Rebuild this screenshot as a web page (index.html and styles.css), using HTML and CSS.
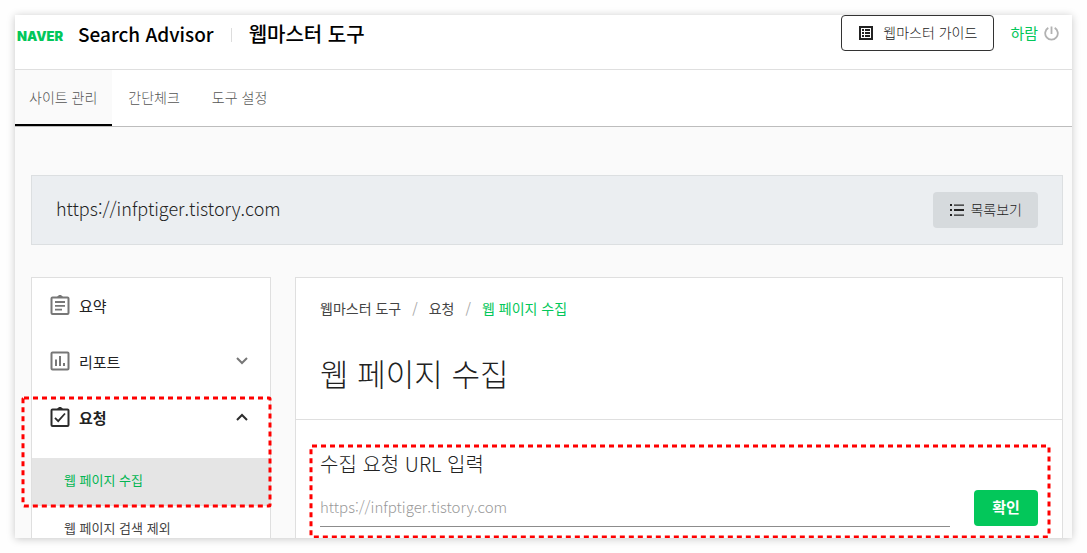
FILE: index.html
```html
<!DOCTYPE html>
<html lang="ko">
<head>
<meta charset="utf-8">
<meta name="viewport" content="width=device-width, initial-scale=1">
<title>웹마스터 도구</title>
<link rel="stylesheet" href="styles.css">
</head>
<body>
<div class="frame">
  <header class="header">
    <a class="logo" href="#">NAVER</a>
    <a class="brand" href="#">Search Advisor</a>
    <span class="divider"></span>
    <strong class="product">웹마스터 도구</strong>
    <div class="account">
      <button class="guide" type="button">
        <svg class="icon-guide" viewBox="0 0 14 14" aria-hidden="true"><path fill="none" stroke="currentColor" stroke-width="2" d="M1 1h12v12H1z"/><path fill="currentColor" d="M3 3h2v2H3zM6 3h5v2H6zM3 6h2v2H3zM6 6h5v2H6zM3 9h2v2H3zM6 9h5v2H6z"/></svg>
        웹마스터 가이드
      </button>
      <a class="user" href="#">하람</a>
      <button class="power" type="button" aria-label="로그아웃">
        <svg viewBox="0 0 15 15" aria-hidden="true"><path d="M7.500 0.500v7.500M4.300 1.900a6.300 6.300 0 1 0 6.400 0" fill="none" stroke="currentColor" stroke-width="1.800"/></svg>
      </button>
    </div>
  </header>
  <nav class="tabs">
    <a class="tab tab-active" href="#">사이트 관리</a>
    <a class="tab" href="#">간단체크</a>
    <a class="tab" href="#">도구 설정</a>
  </nav>
  <div class="content">
    <section class="site">
      <span class="site-url">https://infptiger.tistory.com</span>
      <button class="list-button" type="button">
        <svg class="icon-list" viewBox="0 0 14 12" aria-hidden="true"><path fill="currentColor" d="M0 0h2v2H0zM0 5h2v2H0zM0 10h2v2H0zM4 0.500h10v1.200H4zM4 5h10v2H4zM4 10.500h10v1.200H4z"/></svg>
        목록보기
      </button>
    </section>
    <div class="columns">
      <aside class="sidebar">
        <a class="menu" href="#">
          <svg class="icon-menu" viewBox="0 0 20 20" aria-hidden="true"><rect x="1.500" y="2.500" width="17" height="16.500" rx="1" fill="none" stroke="currentColor" stroke-width="2"/><path d="M6 2.500C7.500 2.500 7.500 0 10 0s2.500 2.500 4 2.500z" fill="currentColor"/><path d="M5 7h10M5 10.800h10M5 14.600h7" stroke="currentColor" stroke-width="1.800"/></svg>
          요약
        </a>
        <a class="menu" href="#">
          <svg class="icon-menu" viewBox="0 0 20 20" aria-hidden="true"><rect x="1.500" y="1.500" width="17" height="17" rx="1" fill="none" stroke="currentColor" stroke-width="2"/><path d="M6 8.500V15M10 5v10M14 12v3" stroke="currentColor" stroke-width="2"/></svg>
          리포트
          <svg class="chevron" viewBox="0 0 12 8" aria-hidden="true"><path d="M1 1l5 5 5-5" fill="none" stroke="currentColor" stroke-width="2"/></svg>
        </a>
        <div class="group">
          <a class="menu menu-open" href="#">
            <svg class="icon-menu" viewBox="0 0 20 20" aria-hidden="true"><rect x="1.500" y="2.500" width="17" height="16.500" rx="1" fill="none" stroke="currentColor" stroke-width="2"/><path d="M6 2.500C7.500 2.500 7.500 0 10 0s2.500 2.500 4 2.500z" fill="currentColor"/><path d="M5 10.800l3.200 3.400 6.800-7.700" fill="none" stroke="currentColor" stroke-width="1.800"/></svg>
            요청
            <svg class="chevron" viewBox="0 0 12 8" aria-hidden="true"><path d="M1 7l5-5 5 5" fill="none" stroke="currentColor" stroke-width="2"/></svg>
          </a>
          <a class="submenu submenu-active" href="#">웹 페이지 수집</a>
          <svg class="outline outline-menu" aria-hidden="true"><rect class="dash" x="2" y="2" rx="1"/></svg>
        </div>
        <a class="submenu" href="#">웹 페이지 검색 제외</a>
      </aside>
      <main class="panel">
        <div class="panel-head">
          <nav class="crumbs">
            <a class="crumb" href="#">웹마스터 도구</a>
            <span class="slash">/</span>
            <a class="crumb" href="#">요청</a>
            <span class="slash">/</span>
            <a class="crumb crumb-current" href="#">웹 페이지 수집</a>
          </nav>
          <h1 class="title">웹 페이지 수집</h1>
        </div>
        <form class="request">
          <label class="request-label" for="url">수집 요청 URL 입력</label>
          <div class="request-row">
            <input class="request-input" id="url" type="text" placeholder="https://infptiger.tistory.com">
            <button class="submit" type="button">확인</button>
          </div>
          <svg class="outline outline-form" aria-hidden="true"><rect class="dash" x="2" y="2" rx="1"/></svg>
        </form>
      </main>
    </div>
  </div>
</div>
</body>
</html>
```

FILE: styles.css
```css
* { box-sizing: border-box; }

body {
  margin: 0;
  height: 100vh;
  padding: 15px;
  background: #fefefe;
  color: #222;
  font-family: "Noto Sans CJK KR", sans-serif;
  font-weight: 300;
}

a { color: inherit; text-decoration: none; }
button, input { font: inherit; color: inherit; }
button { cursor: pointer; }
svg { display: block; flex: none; }

.frame {
  height: 100%;
  overflow: hidden;
  background: #fafafa;
  box-shadow: 0 1px 8px rgba(0, 0, 0, 0.22);
}

.header {
  display: flex;
  align-items: center;
  height: 55px;
  padding: 0 13px 18px 2px;
  background: #fff;
  border-bottom: 1px solid #dfdfdf;
  color: #000;
}

.logo {
  width: 48px;
  margin-top: 6px;
  color: #03c75a;
  font-family: Inter, "Open Sans", sans-serif;
  font-size: 13px;
  font-weight: 900;
}

.brand {
  margin-left: 13px;
  font-size: 19px;
  font-weight: 500;
}

.divider {
  width: 1px;
  height: 14px;
  margin: 4px 17px 0;
  background: #ddd;
}

.product { font-size: 20px; font-weight: 500; }

.account {
  display: flex;
  align-items: center;
  margin-left: auto;
}

.guide {
  display: flex;
  align-items: center;
  gap: 10px;
  height: 36px;
  padding: 0 16px 2px 17px;
  background: #fff;
  border: 1px solid #333;
  border-radius: 4px;
  color: #222;
  font-size: 14px;
}

.icon-guide { width: 14px; height: 14px; margin-top: 2px; }

.user {
  margin-left: 16px;
  padding-bottom: 2px;
  color: #03c75a;
  font-size: 15px;
  font-weight: 400;
}

.power {
  margin-left: 6px;
  padding: 0;
  background: none;
  border: 0;
  color: #b2b2b2;
}

.power svg { width: 15px; height: 15px; }

.tabs {
  display: flex;
  height: 57px;
  background: #fff;
  border-bottom: 1px solid #bdbdbd;
}

.tab {
  height: 56px;
  padding: 0 16px;
  color: #555;
  font-size: 14px;
  line-height: 54px;
}

.tab-active {
  padding: 0 15px 0 14px;
  background: #fafafa;
  border-bottom: 2px solid #000;
}

.content { padding: 48px 9px 0 16px; }

.site {
  display: flex;
  align-items: center;
  justify-content: space-between;
  height: 70px;
  padding: 0 24px;
  background: #ebeef1;
  border: 1px solid #dcdfe1;
}

.site-url { padding-bottom: 4px; font-size: 18px; }

.list-button {
  display: flex;
  align-items: center;
  gap: 6px;
  height: 36px;
  padding: 0 16px 2px 17px;
  background: #d6dadd;
  border: 0;
  border-radius: 4px;
  color: #222;
  font-size: 14px;
}

.icon-list { width: 14px; height: 12px; margin-top: 2px; }

.columns {
  display: flex;
  gap: 24px;
  margin-top: 32px;
}

.sidebar {
  flex: none;
  width: 240px;
  height: 400px;
  background: #fff;
  border: 1px solid #dfdfdf;
}

.menu {
  display: flex;
  align-items: center;
  gap: 9px;
  height: 56px;
  padding: 0 22px 2px 18px;
  color: #222;
  font-size: 15px;
  font-weight: 400;
}

.icon-menu { width: 20px; height: 20px; color: #777; }
.chevron { width: 12px; height: 8px; margin-left: auto; color: #777; }

.group { position: relative; }

.menu-open { height: 68px; padding-bottom: 14px; font-weight: 700; }
.menu-open .icon-menu, .menu-open .chevron { color: #2c2c2c; }

.submenu {
  display: block;
  height: 48px;
  padding-left: 32px;
  color: #444;
  font-size: 13px;
  font-weight: 400;
  line-height: 44px;
}

.submenu-active { background: #e5e5e5; color: #03b553; }

.panel {
  flex: 1;
  height: 400px;
  background: #fff;
  border: 1px solid #dfdfdf;
}

.panel-head {
  height: 142px;
  padding: 19px 24px 0;
  border-bottom: 1px solid #dfdfdf;
}

.crumbs {
  display: flex;
  gap: 11px;
  color: #444;
  font-size: 14px;
  font-weight: 400;
  line-height: 22px;
}

.slash { color: #aaa; }
.crumb-current { color: #03c75a; }

.title {
  margin: 30px 0 0;
  font-size: 31px;
  font-weight: 300;
  line-height: 48px;
}

.request {
  position: relative;
  padding: 30px 24px;
}

.request-label {
  display: block;
  font-size: 20px;
  line-height: 28px;
}

.request-row {
  display: flex;
  gap: 24px;
  margin-top: 12px;
}

.request-input {
  flex: 1;
  min-width: 0;
  height: 37px;
  padding: 0 0 4px;
  background: none;
  border: 0;
  border-bottom: 1px solid #8c8c8c;
  font-size: 15px;
}

.request-input::placeholder { color: #999; }

.submit {
  width: 64px;
  height: 36px;
  padding: 0 0 3px;
  background: #03c75a;
  border: 0;
  border-radius: 4px;
  color: #fff;
  font-size: 15px;
  font-weight: 700;
}

.outline {
  position: absolute;
  overflow: visible;
  pointer-events: none;
}

.outline-menu {
  top: 6px;
  left: -11px;
  width: calc(100% + 13px);
  height: 112px;
}

.outline-form {
  top: 24px;
  left: 13px;
  width: calc(100% - 24px);
  height: 95px;
}

.dash {
  width: calc(100% - 4px);
  height: calc(100% - 4px);
  fill: none;
  stroke: #f00;
  stroke-width: 3;
  stroke-dasharray: 5 4;
}
```
